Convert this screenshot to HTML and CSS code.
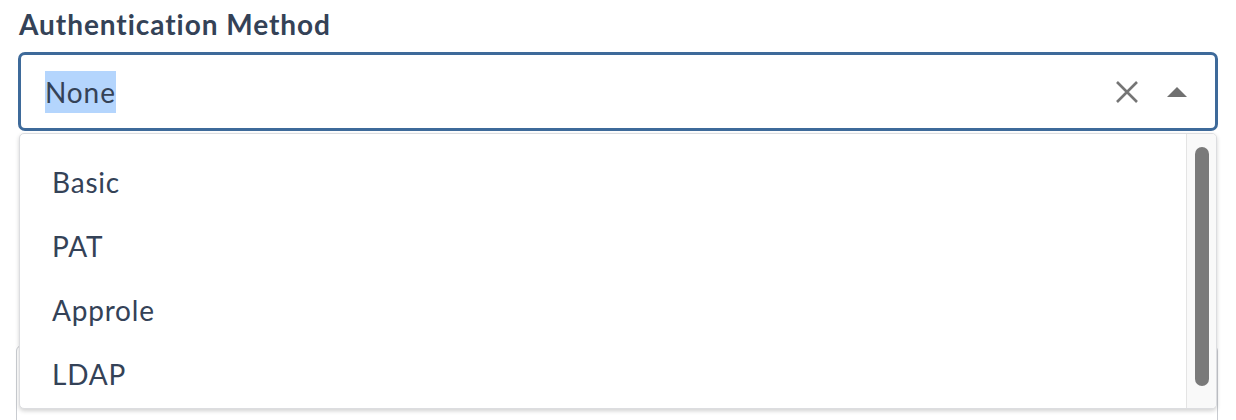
FILE: index.html
```html
<!DOCTYPE html>
<html lang="en">
<head>
    <meta charset="UTF-8">
    <title>Authentication Method</title>
    <link rel="stylesheet" href="styles.css">
</head>
<body>
    <div class="form">
        <div class="field">
            <label class="field-label" for="authMethod">Authentication Method</label>
            <div class="select is-open">
                <div class="select-control">
                    <span class="select-value"><span class="selected-text">None</span></span>
                    <button class="select-clear" aria-label="Clear">
                        <svg width="24" height="24" viewBox="0 0 24 24"><path d="M2 2 L22 22 M22 2 L2 22" stroke="#757575" stroke-width="2.6" fill="none"/></svg>
                    </button>
                    <span class="select-caret">
                        <svg width="20" height="10" viewBox="0 0 20 10"><path d="M10 0 L20 10 L0 10 Z" fill="#707070"/></svg>
                    </span>
                </div>
                <div class="select-menu">
                    <ul class="select-options">
                        <li>Basic</li>
                        <li>PAT</li>
                        <li>Approle</li>
                        <li>LDAP</li>
                    </ul>
                    <div class="select-scrollbar"><div class="select-thumb"></div></div>
                </div>
            </div>
        </div>
        <div class="field">
            <div class="text-input"></div>
        </div>
    </div>
</body>
</html>
```

FILE: styles.css
```css
body {
    margin: 0;
    font-family: Lato, "Noto Sans", sans-serif;
    color: #344257;
    background: #fff;
}
.form {
    padding: 7px 18px 0 18px;
}
.field-label {
    display: block;
    font-size: 28px;
    font-weight: 700;
    letter-spacing: 0.95px;
    line-height: 34px;
    padding-left: 1px;
    margin-bottom: 11px;
}
.select {
    position: relative;
}
.select-control {
    display: flex;
    align-items: center;
    height: 73px;
    border: 3px solid #3e6a9a;
    border-radius: 7px;
    padding: 0 28px 0 24px;
}
.select-value {
    flex: 1;
    font-size: 28px;
    letter-spacing: 0.9px;
}
.selected-text {
    background: #b4d5fd;
    padding: 4px 0;
}
.select-clear {
    border: none;
    background: none;
    padding: 0;
    display: flex;
    margin-right: 28px;
}
.select-caret {
    display: flex;
}
.select-menu {
    position: absolute;
    z-index: 2;
    top: 81px;
    left: 1px;
    right: 1px;
    height: 274px;
    display: flex;
    background: #fff;
    border: 1px solid #dcdde0;
    border-radius: 5px;
    box-shadow: 0 2px 4px rgba(0, 0, 0, 0.18);
    overflow: hidden;
}
.select-options {
    flex: 1;
    list-style: none;
    margin: 0;
    padding: 16px 0 0 0;
}
.select-options li {
    height: 64px;
    line-height: 64px;
    font-size: 28px;
    letter-spacing: 0.8px;
    padding-left: 32px;
}
.select-scrollbar {
    width: 29px;
    background: #f9f9f9;
    border-left: 1px solid #e4e4e4;
    display: flex;
    justify-content: center;
    padding-top: 13px;
}
.select-thumb {
    width: 14px;
    height: 239px;
    background: #7a7a7a;
    border-radius: 7px;
}
.text-input {
    margin-top: 214px;
    margin-left: -2px;
    height: 80px;
    border: 1px solid #c9ccd1;
    border-radius: 6px;
}
```
